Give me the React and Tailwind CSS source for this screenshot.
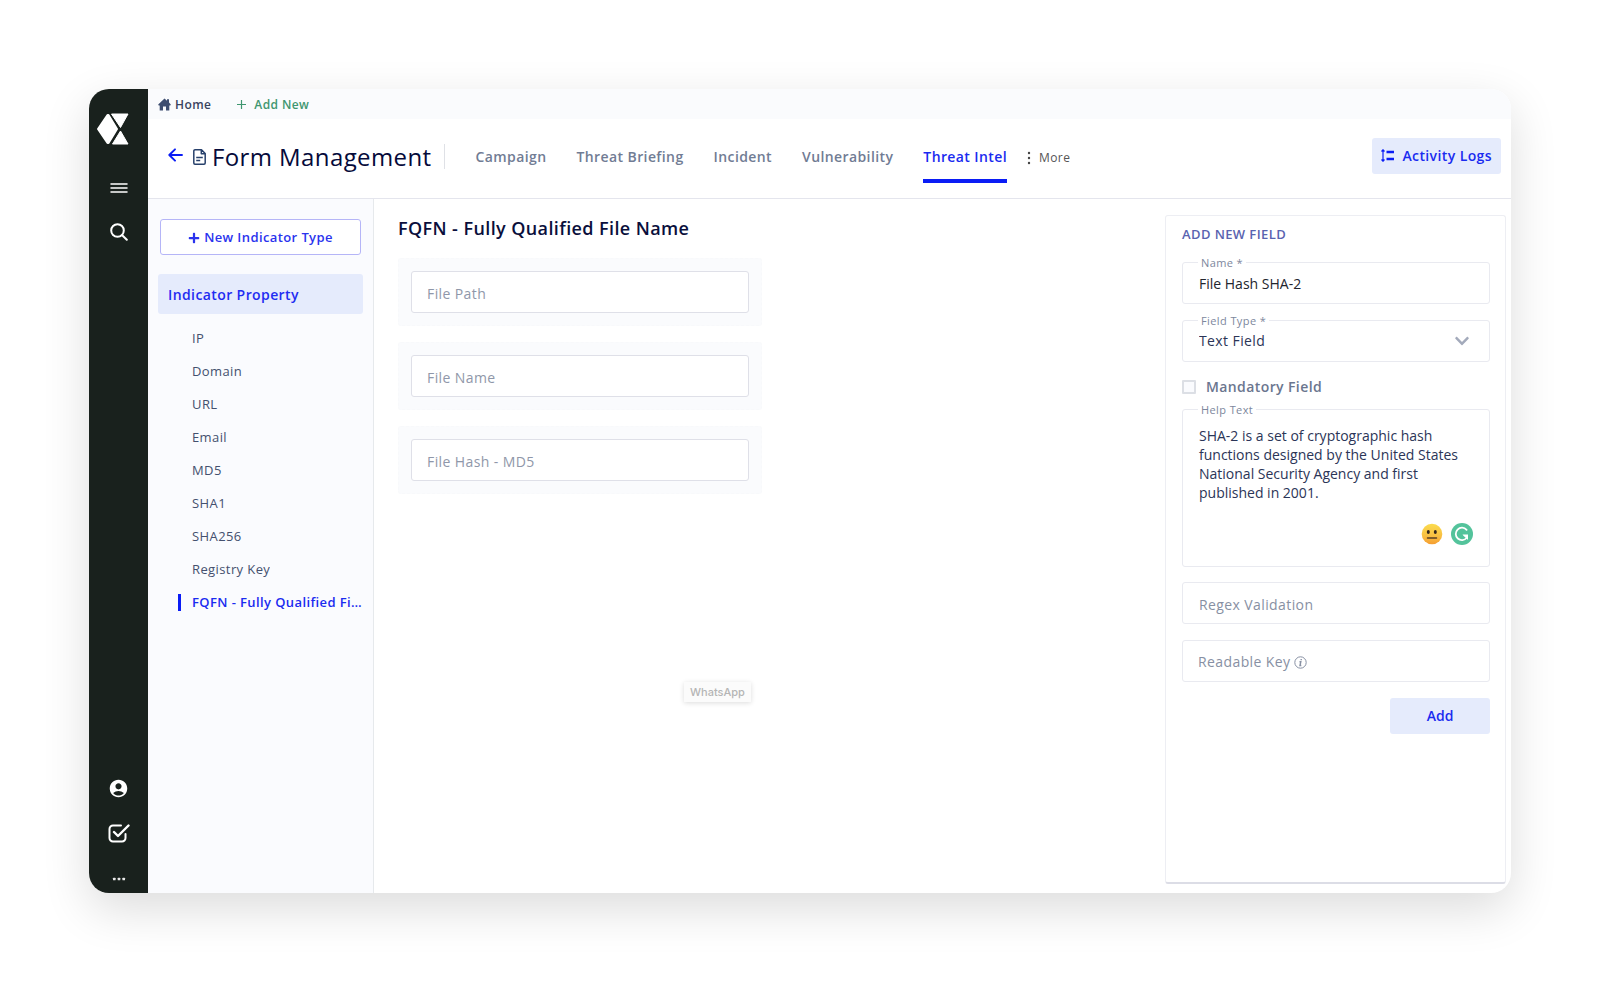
import { useState } from 'react';
import { FaPlus, FaChevronDown } from 'react-icons/fa';
import { MdAccountCircle } from 'react-icons/md';

const tabs = ['Campaign', 'Threat Briefing', 'Incident', 'Vulnerability', 'Threat Intel'];

const properties = [
  'IP',
  'Domain',
  'URL',
  'Email',
  'MD5',
  'SHA1',
  'SHA256',
  'Registry Key',
  'FQFN - Fully Qualified File Name',
];

const formFields = ['File Path', 'File Name', 'File Hash - MD5'];

const fieldBox = 'w-full rounded-[3px] border border-[#e9eaf0] bg-white px-4 text-sm outline-none';

const Logo = () => (
  <svg width="34" height="34" viewBox="0 0 34 34" fill="#fff" stroke="#fff" strokeLinejoin="round" aria-hidden="true">
    <path strokeWidth="2" d="M2 17 11.500 3h1L21 17l-8.500 14h-1z" />
    <path strokeWidth="1" d="M15.500 2H32l-7.500 13.500zM24.500 19 32 32H16.500z" />
  </svg>
);

const Sidebar = () => (
  <aside className="flex w-[59px] shrink-0 flex-col items-center bg-[#19211d] text-white">
    <a href="#home" aria-label="Dashboard" className="mt-[23px] mr-3">
      <Logo />
    </a>
    <button type="button" aria-label="Menu" className="mt-8 flex h-5 items-center">
      <svg width="18" height="12" viewBox="0 0 18 12" stroke="#fff" strokeWidth="1.500" strokeLinecap="round">
        <path d="M1 2h16M1 6h16M1 10h16" />
      </svg>
    </button>
    <button type="button" aria-label="Search" className="mt-6 flex h-5 items-center">
      <svg width="18" height="18" viewBox="0 0 18 18" fill="none" stroke="#fff" strokeWidth="2" strokeLinecap="round">
        <circle cx="7.500" cy="7.500" r="6.300" />
        <path d="m12.200 12.200 4.600 4.600" />
      </svg>
    </button>
    <div className="mt-auto mb-2 flex flex-col items-center gap-6">
      <button type="button" aria-label="Account">
        <MdAccountCircle size={21} />
      </button>
      <button type="button" aria-label="Tasks" className="mb-1.5">
        <svg width="22" height="20" viewBox="0 0 22 20" fill="none" stroke="#fff" strokeWidth="2" strokeLinecap="round" strokeLinejoin="round">
          <path d="M13 2.500H5A3.500 3.500 0 0 0 1.500 6v9A3.500 3.500 0 0 0 5 18.500h9a3.500 3.500 0 0 0 3.500-3.500v-4" />
          <path strokeWidth="2.400" d="m6 9 4 4L20.500 2.500" />
        </svg>
      </button>
      <button type="button" aria-label="More options" className="flex h-3 items-center">
        <svg width="14" height="4" viewBox="0 0 14 4" fill="#e8e8e8">
          <rect x="1" y=".7" width="2.600" height="2.600" rx=".6" />
          <rect x="5.700" y=".7" width="2.600" height="2.600" rx=".6" />
          <rect x="10.400" y=".7" width="2.600" height="2.600" rx=".6" />
        </svg>
      </button>
    </div>
  </aside>
);

const Header = ({ tab, onTab }) => (
  <header className="flex h-20 shrink-0 items-center border-b border-[#e4e5ed] pr-2.5 pb-1 pl-5">
    <button type="button" aria-label="Back" className="mr-2.5 mb-1">
      <svg width="15" height="14" viewBox="0 0 15 14" fill="none" stroke="#0a1cf5" strokeWidth="1.900" strokeLinecap="round" strokeLinejoin="round">
        <path d="M14 7H1.500M7 1.300 1.300 7 7 12.700" />
      </svg>
    </button>
    <svg width="13" height="16" viewBox="0 0 13 16" fill="none" stroke="#27406b" strokeWidth="1.500" strokeLinejoin="round" aria-hidden="true">
      <path d="M8.500.8H2A1.200 1.200 0 0 0 .8 2v12A1.200 1.200 0 0 0 2 15.200h9a1.200 1.200 0 0 0 1.200-1.200V4.500zM8.300 1v3.700h3.700" />
      <path d="M3.200 8.500h6.600M3.200 11.500h4" />
    </svg>
    <h1 className="ml-1.5 text-2xl font-medium text-[#050a3a]">Form Management</h1>
    <span className="ml-3 h-[25px] w-px bg-[#dfe1e6]" />
    <nav className="ml-[31px] flex items-center gap-[30px]">
      {tabs.map((name) => (
        <button
          key={name}
          type="button"
          onClick={() => onTab(name)}
          className={
            name === tab
              ? 'border-b-4 border-[#0a1cf5] pt-4 pb-3 text-sm font-semibold text-[#1a2bf0]'
              : 'border-b-4 border-transparent pt-4 pb-3 text-sm font-semibold text-[#717c94]'
          }
        >
          {name}
        </button>
      ))}
    </nav>
    <button type="button" className="mt-0.5 ml-5 flex items-center gap-2 text-xs text-[#555]">
      <svg width="4" height="14" viewBox="0 0 4 14" fill="#444" aria-hidden="true">
        <circle cx="2" cy="2" r="1.200" />
        <circle cx="2" cy="7" r="1.200" />
        <circle cx="2" cy="12" r="1.200" />
      </svg>
      More
    </button>
    <button type="button" className="mb-0.5 ml-auto flex h-9 items-center gap-2 rounded-[3px] bg-[#e5ebfc] px-[9px] text-sm font-semibold text-[#1a2bf0]">
      <svg width="13" height="13" viewBox="0 0 13 13" fill="none" stroke="#0a1cf5" aria-hidden="true">
        <path strokeWidth="1.200" d="M2 .5v12M.5 2.500 2 .8l1.500 1.700M.5 10.500 2 12.200l1.500-1.700" />
        <path strokeWidth="2.300" d="M5.500 3H13M5.500 10H13" />
      </svg>
      Activity Logs
    </button>
  </header>
);

const IndicatorList = () => {
  const [selected, setSelected] = useState(properties.length - 1);

  return (
    <aside className="w-[226px] shrink-0 border-r border-[#e6e9ec] bg-[#fafbfe] px-2.5 pt-5">
      <div className="px-0.5">
        <button type="button" className="flex h-9 w-full items-center justify-center gap-1 rounded-[3px] border border-[#b5b5f7] bg-white pt-px text-[13px] font-semibold text-[#2a33ee]">
          <FaPlus size={12} />
          New Indicator Type
        </button>
      </div>
      <h2 className="mt-[19px] flex h-10 items-center rounded-[3px] bg-[#e5ebfc] px-2.5 pt-px text-sm font-semibold text-[#1f2cf2]">
        Indicator Property
      </h2>
      <ul className="mt-2 text-[13px]">
        {properties.map((name, i) => (
          <li key={name} className="flex h-[33px] items-center pl-5">
            <button
              type="button"
              onClick={() => setSelected(i)}
              className={
                i === selected
                  ? 'truncate border-l-3 border-[#0a1cf5] pl-[11px] leading-[17px] font-semibold text-[#1a2bf0]'
                  : 'truncate border-l-3 border-transparent pl-[11px] leading-[17px] text-[#44506e]'
              }
            >
              {name}
            </button>
          </li>
        ))}
      </ul>
    </aside>
  );
};

const FloatingLabel = ({ htmlFor, children }) => (
  <label htmlFor={htmlFor} className="absolute -top-[7px] left-4 bg-white px-[3px] text-[11px] leading-4 text-[#7d879d]">
    {children}
  </label>
);

const AddField = () => {
  const [name, setName] = useState('File Hash SHA-2');
  const [help, setHelp] = useState(
    'SHA-2 is a set of cryptographic hash functions designed by the United States National Security Agency and first published in 2001.'
  );

  return (
    <form
      onSubmit={(e) => e.preventDefault()}
      className="mt-4 mr-[5px] mb-[9px] w-[341px] shrink-0 rounded-[3px] border border-b-2 border-[#edeef3] border-b-[#dcdde6] pt-2 pr-[15px] pl-4"
    >
      <h2 className="text-[13px] leading-5 font-semibold text-[#5963b0]">ADD NEW FIELD</h2>

      <div className="relative mt-[18px]">
        <FloatingLabel htmlFor="name">Name *</FloatingLabel>
        <input id="name" value={name} onChange={(e) => setName(e.target.value)} className={`${fieldBox} h-[42px] tracking-normal text-[#22252e]`} />
      </div>

      <div className="relative mt-4">
        <FloatingLabel htmlFor="type">Field Type *</FloatingLabel>
        <select id="type" className={`${fieldBox} h-[42px] appearance-none text-[#2b3557]`}>
          <option>Text Field</option>
        </select>
        <FaChevronDown size={16} className="pointer-events-none absolute top-[13px] right-5 text-[#a3aabb]" />
      </div>

      <label className="mt-[15px] flex items-center gap-2.5 text-sm font-semibold text-[#6b768f]">
        <input type="checkbox" className="size-3.5 appearance-none rounded-[1px] border-2 border-[#dcdfe5] bg-[#fafbfe] checked:bg-[#0a1cf5]" />
        Mandatory Field
      </label>

      <div className="relative mt-3">
        <FloatingLabel htmlFor="help">Help Text</FloatingLabel>
        <textarea
          id="help"
          value={help}
          onChange={(e) => setHelp(e.target.value)}
          className={`${fieldBox} block h-[158px] resize-none py-4 leading-[19px] tracking-normal text-[#2b3557]`}
        />
        <div className="absolute right-[17px] bottom-[22px] flex items-center gap-2">
          <svg width="22" height="22" viewBox="0 0 22 22" aria-hidden="true">
            <defs>
              <linearGradient id="face" x1="0" y1="0" x2="0" y2="1">
                <stop offset="0" stopColor="#fbdc4e" />
                <stop offset="0.600" stopColor="#f8bf42" />
                <stop offset="1" stopColor="#f59d31" />
              </linearGradient>
            </defs>
            <circle cx="11" cy="11" r="10.300" fill="url(#face)" />
            <ellipse cx="7.300" cy="9" rx="1.500" ry="2.100" fill="#33261d" />
            <ellipse cx="14.300" cy="9" rx="1.500" ry="2.100" fill="#33261d" />
            <path d="M6.500 15h9" stroke="#5a4023" strokeWidth="1.500" strokeLinecap="round" />
          </svg>
          <svg width="22" height="22" viewBox="0 0 22 22" fill="none" aria-hidden="true">
            <circle cx="11" cy="11" r="11" fill="#53c39b" />
            <path d="M15.600 6.800A6.200 6.200 0 1 0 15.800 14.800" stroke="#fff" strokeWidth="1.800" strokeLinecap="round" />
            <path d="M11.500 11.600h5.500v5.400l-2-2-2.300-2z" fill="#fff" />
          </svg>
        </div>
      </div>

      <input aria-label="Regex Validation" placeholder="Regex Validation" className={`${fieldBox} mt-[15px] h-[42px] pt-0.5 placeholder:text-[#8790a3]`} />

      <div className="relative mt-4">
        <input id="key" className={`${fieldBox} h-[42px]`} />
        <label htmlFor="key" className="absolute inset-y-0 left-4 flex items-center gap-1 pt-0.5 text-sm text-[#8790a3]">
          Readable Key
          <svg width="13" height="13" viewBox="0 0 13 13" fill="none" stroke="#8790a3" aria-hidden="true">
            <circle cx="6.500" cy="6.500" r="5.700" />
            <path strokeWidth="1.400" d="M7.200 3v1.200M5.500 5.700h1.300L6 9.500h1.300" />
          </svg>
        </label>
      </div>

      <button type="submit" className="mt-4 ml-auto block h-9 w-[100px] rounded-[3px] bg-[#e5ebfc] text-sm font-semibold tracking-normal text-[#1a2bf0]">
        Add
      </button>
    </form>
  );
};

export default function App() {
  const [tab, setTab] = useState('Threat Intel');

  return (
    <div className="flex min-h-screen bg-white p-[89px] font-['Open_Sans',sans-serif] tracking-wide">
      <div className="flex flex-1 overflow-hidden rounded-[20px] bg-white shadow-[0_16px_48px_rgba(0,0,0,0.14)]">
        <Sidebar />
        <div className="flex min-w-0 flex-1 flex-col">
          <div className="flex h-[30px] shrink-0 items-center bg-[#fafbfd] pt-px pl-2.5 text-xs font-semibold">
            <a href="#home" className="flex items-center gap-1 text-[#39435e]">
              <svg width="13" height="13" viewBox="0 0 13 13" fill="#3d4d70" aria-hidden="true">
                <path d="M6.500.5 9 2.800V1.300h2v3.300l1.800 2-.5.900H11.300V12.500H8V8.500H5v4H1.700v-5H.7l-.5-.9z" />
              </svg>
              Home
            </a>
            <a href="#new" className="ml-[26px] flex items-center gap-2 text-[#3f9670]">
              <svg width="9" height="9" viewBox="0 0 9 9" stroke="#3f9670" strokeWidth="1.200" aria-hidden="true">
                <path d="M4.500 0v9M0 4.500h9" />
              </svg>
              Add New
            </a>
          </div>
          <Header tab={tab} onTab={setTab} />
          <div className="flex flex-1">
            <IndicatorList />
            <main className="min-w-0 flex-1 px-6 pt-[15px]">
              <h2 className="text-lg leading-7 font-semibold text-[#0a0f3c]">FQFN - Fully Qualified File Name</h2>
              <div className="mt-4 flex w-[364px] flex-col gap-4">
                {formFields.map((name) => (
                  <div key={name} className="rounded-[3px] border border-dashed border-[#f8f9fb] bg-[#fafbfd] p-3">
                    <input
                      aria-label={name}
                      placeholder={name}
                      className="block h-[42px] w-full rounded-[3px] border border-[#dfe0e8] bg-white px-[15px] pt-0.5 text-sm outline-none placeholder:text-[#8f97a9]"
                    />
                  </div>
                ))}
              </div>
              <div className="mt-[188px] ml-[286px] w-fit bg-[#fbfbfb] px-1.5 text-[11px] leading-5 font-medium tracking-normal text-[#b5b5b5] shadow-[0_1px_5px_rgba(0,0,0,0.14)] font-[Inter,sans-serif]">
                WhatsApp
              </div>
            </main>
            <AddField />
          </div>
        </div>
      </div>
    </div>
  );
}
